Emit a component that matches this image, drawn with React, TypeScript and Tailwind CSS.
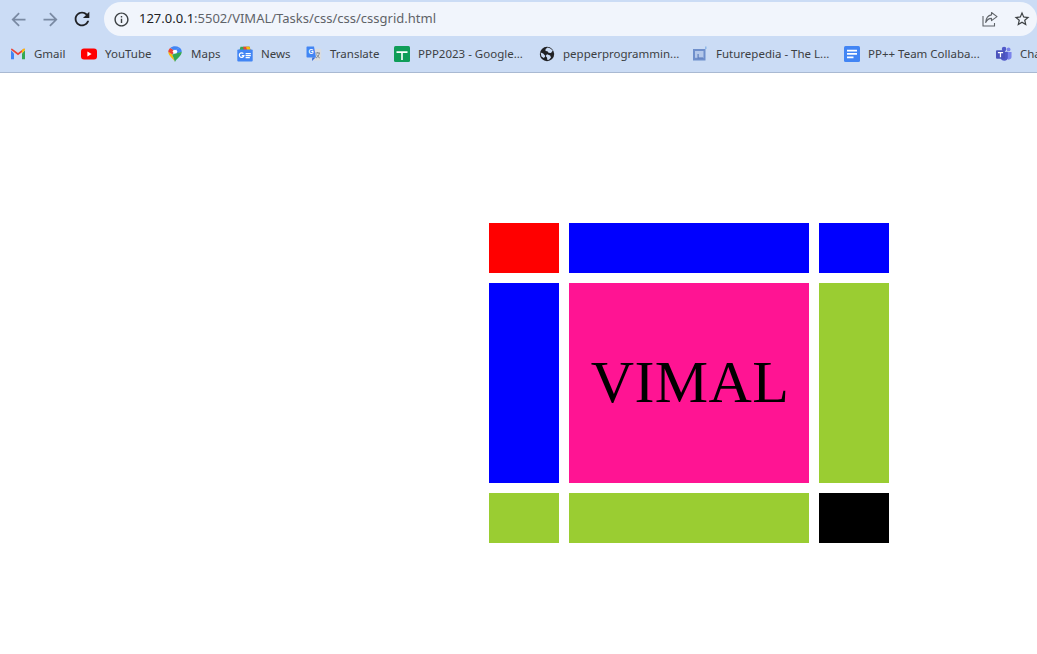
/**
 * Browser window showing the cssgrid.html task page.
 */
import type { ReactNode } from "react";

function GmailIcon() {
  return (
    <svg width="16" height="16" viewBox="0 0 16 16">
      <path d="M1 4.2v9h3V7.5z" fill="#4285f4" />
      <path d="M15 4.2v9h-3V7.5z" fill="#34a853" />
      <path d="M1 3.8 8 9.2l7-5.4-.9-1.4L12 3.9 8 7 4 3.9 1.9 2.4C1.4 2.4 1 3 1 3.8z" fill="#ea4335" />
      <path d="M12 3.9 14.1 2.4c.5 0 .9.6.9 1.4L12 7.5z" fill="#fbbc04" />
    </svg>
  );
}

function YouTubeIcon() {
  return (
    <svg width="16" height="16" viewBox="0 0 16 16">
      <rect x="0" y="2.5" width="16" height="11" rx="3" fill="#ff0000" />
      <path d="M6.4 5.6 10.6 8l-4.2 2.4z" fill="#fff" />
    </svg>
  );
}

function MapsIcon() {
  return (
    <svg width="16" height="16" viewBox="0 0 16 16">
      <g transform="translate(8 8) scale(1.35 1.05) translate(-8 -8)">
        <path d="M8 15.5C7 12.5 3 9.8 3 5.8L6 8.5z" fill="#fbbc04" />
        <path d="M3 5.8C3 4.4 3.6 3 4.5 2.2L8 5 6 8.5z" fill="#ea4335" />
        <path d="M4.5 2.2C5.4 1.2 6.7.7 8 .7c1.2 0 2.3.4 3.2 1.2L8 5z" fill="#4285f4" />
        <path d="M11.2 1.9C12.3 2.8 13 4.2 13 5.8L10 7.6 8 5z" fill="#4285f4" />
        <path d="M13 5.8c0 4-4 6.7-5 9.7l-2-7L10 7z" fill="#34a853" />
        <circle cx="8" cy="5.6" r="1.7" fill="#fff" />
      </g>
    </svg>
  );
}

function NewsIcon() {
  return (
    <svg width="16" height="16" viewBox="0 0 16 16">
      <path d="M2.5 4 3.5.8h9l1 3.2z" fill="#34a853" />
      <path d="M6 .8h6.5l1 3.2H7z" fill="#ea4335" />
      <path d="M9 .8h3.5l1 3.2H10z" fill="#fbbc04" />
      <rect x="0.3" y="3.5" width="15.4" height="12" rx="1" fill="#4285f4" />
      <path d="M6.4 7.6A2.3 2.3 0 1 0 6.9 9.6H4.8" fill="none" stroke="#fff" strokeWidth="1.2" />
      <path d="M8.6 7h5.2v1.2H8.6zM8.6 9h5.2v1.2H8.6zM8.6 11h4.2v1.2H8.6z" fill="#fff" />
    </svg>
  );
}

function TranslateIcon() {
  return (
    <svg width="16" height="16" viewBox="0 0 16 16">
      <path d="M7 3h8.2v11.5H6.5z" fill="#dadce0" />
      <path d="M9.5 7h4.5M11.7 6v1M10 12c2-1 3-2.7 3.3-5M10.5 8.5c.7 1.6 1.8 2.7 3.3 3.5" stroke="#80868b" strokeWidth=".9" fill="none" />
      <path d="M.5 1.5C.5.9.9.5 1.5.5H8l2 11H1.5c-.6 0-1-.4-1-1z" fill="#4285f4" />
      <path d="M6.3 11.5 6 15l3.5-3.5z" fill="#3367d6" />
      <text x="2.4" y="8" fontSize="6.5" fontWeight="700" fill="#fff" fontFamily="Liberation Sans, sans-serif">G</text>
    </svg>
  );
}

function SheetIcon() {
  return (
    <svg width="16" height="16" viewBox="0 0 16 16">
      <rect width="16" height="16" rx="1.5" fill="#0f9d58" />
      <path d="M2.5 5.3h11v1.6H8.8v7.1H7.2V6.9H2.5z" fill="#fff" />
    </svg>
  );
}

function GlobeIcon() {
  return (
    <svg width="16" height="16" viewBox="0 0 16 16">
      <circle cx="8" cy="8" r="7.2" fill="#202124" />
      <path d="M8.6 1.4 11 2.2l2.8 2.4L12 7l-2.4-.2-1.2-1.6L6.5 5 6.6 3zM8 8.2l3.2 1.2.8 2-2 2.4-1.6.2-.4-2.4L6.6 10zM1.6 6.4l2.6 1.2L6 9.6v1.2L4.8 12 2.4 10.4z" fill="#cbdcf5" />
    </svg>
  );
}

function FuturepediaIcon() {
  return (
    <svg width="16" height="16" viewBox="0 0 16 16">
      <path d="M13.8 0.5v2.5" stroke="#8ab4e8" strokeWidth="1.4" />
      <rect x="1" y="3" width="12.5" height="11.5" fill="#6f8fcb" />
      <rect x="3" y="5" width="8.5" height="6.8" fill="#b4c8ea" />
      <path d="M5.5 8h1.2v3.6H11v1H5.5z" fill="#5f7fbd" />
    </svg>
  );
}

function DocsIcon() {
  return (
    <svg width="16" height="16" viewBox="0 0 16 16">
      <rect width="16" height="16" rx="1.5" fill="#4285f4" />
      <path d="M3 3.7h10v1.7H3zM3 7.1h10v1.7H3zM3 10.5h6.5v1.7H3z" fill="#fff" />
    </svg>
  );
}

function TeamsIcon() {
  return (
    <svg width="17" height="16" viewBox="0 0 17 16">
      <circle cx="13.4" cy="3.2" r="2" fill="#7b83eb" />
      <path d="M10.5 6h6v5c0 1.8-1.4 3-3 3s-3-1.2-3-3z" fill="#7b83eb" />
      <circle cx="8.6" cy="2.6" r="2.4" fill="#5059c9" />
      <path d="M5 5.5h7.5v6.5c0 1.8-1.6 3.3-3.6 3.3S5 13.8 5 12z" fill="#5059c9" />
      <rect x="0" y="4" width="9.5" height="9" rx="1" fill="#4b53bc" />
      <path d="M2 6h5.5v1.3H5.4v4.2H4.1V7.3H2z" fill="#fff" />
    </svg>
  );
}

const bookmarks: { label: string; icon: ReactNode; width: string }[] = [
  { label: "Gmail", icon: <GmailIcon />, width: "w-[71px]" },
  { label: "YouTube", icon: <YouTubeIcon />, width: "w-[86px]" },
  { label: "Maps", icon: <MapsIcon />, width: "w-[70px]" },
  { label: "News", icon: <NewsIcon />, width: "w-[69px]" },
  { label: "Translate", icon: <TranslateIcon />, width: "w-[88px]" },
  { label: "PPP2023 - Google...", icon: <SheetIcon />, width: "w-[145px]" },
  { label: "pepperprogrammin...", icon: <GlobeIcon />, width: "w-[153px]" },
  { label: "Futurepedia - The L...", icon: <FuturepediaIcon />, width: "w-[152px]" },
  { label: "PP++ Team Collaba...", icon: <DocsIcon />, width: "w-[152px]" },
  { label: "Cha", icon: <TeamsIcon />, width: "w-[60px]" },
];

function ToolbarButton({ color, size, children }: { color: string; size: number; children: ReactNode }) {
  return (
    <div className="flex h-8 w-8 items-center justify-center">
      <svg width={size} height={size} viewBox="0 0 24 24" fill={color}>
        {children}
      </svg>
    </div>
  );
}

function Toolbar() {
  return (
    <div className="flex h-[36px] items-start pl-[2px] pt-[2px]">
      <div className="flex h-[34px] items-center">
        <ToolbarButton color="#7a8aa3" size={21}>
          <path d="M20 11H7.83l5.59-5.59L12 4l-8 8 8 8 1.41-1.41L7.83 13H20v-2z" />
        </ToolbarButton>
        <ToolbarButton color="#7a8aa3" size={21}>
          <path d="M12 4l-1.41 1.41L16.17 11H4v2h12.17l-5.58 5.59L12 20l8-8z" />
        </ToolbarButton>
        <ToolbarButton color="#1f2125" size={22}>
          <path d="M17.65 6.35C16.2 4.9 14.21 4 12 4c-4.42 0-7.99 3.58-7.99 8s3.57 8 7.99 8c3.73 0 6.84-2.55 7.73-6h-2.08c-.82 2.33-3.04 4-5.65 4-3.31 0-6-2.69-6-6s2.69-6 6-6c1.66 0 3.14.69 4.22 1.78L13 11h7V4l-2.35 2.35z" />
        </ToolbarButton>
      </div>
      <div className="ml-[6px] flex h-[34px] flex-1 items-center rounded-[17px] bg-[#f1f5fc] pl-[9px] pr-[6px]">
        <svg width="17" height="17" viewBox="0 0 24 24" fill="#3c4043">
          <path d="M11 7h2v2h-2zm0 4h2v6h-2zm1-9C6.48 2 2 6.48 2 12s4.48 10 10 10 10-4.48 10-10S17.52 2 12 2zm0 18c-4.41 0-8-3.59-8-8s3.59-8 8-8 8 3.59 8 8-3.59 8-8 8z" />
        </svg>
        <span className="ml-[9px] flex-1 text-[13px] text-[#5f6368]">
          <span className="text-[#202124]">127.0.0.1</span>:5502/VIMAL/Tasks/css/css/cssgrid.html
        </span>
        <svg width="16" height="16" viewBox="0 0 16 16" fill="none" stroke="#5f6368" strokeWidth="1.1">
          <path d="M1 5v10h11.5v-3" />
          <path d="M9.5 1.5 15 5.6l-5.5 4V7.4C7 7.4 5 8.7 3.7 11.5 4 7.5 6 4.4 9.5 3.9z" strokeLinejoin="round" />
        </svg>
        <svg className="ml-[15px]" width="18" height="18" viewBox="0 0 24 24" fill="#3c4043">
          <path d="M22 9.24l-7.19-.62L12 2 9.19 8.63 2 9.24l5.46 4.73L5.82 21 12 17.27 18.18 21l-1.63-7.03L22 9.24zM12 15.4l-3.76 2.27 1-4.28-3.32-2.88 4.38-.38L12 6.1l1.71 4.04 4.38.38-3.32 2.88 1 4.28L12 15.4z" />
        </svg>
      </div>
    </div>
  );
}

function BookmarkBar() {
  return (
    <div className="flex h-[37px] items-center overflow-hidden border-b border-[#a9b9d2] pb-[1px] pl-[10px]">
      {bookmarks.map((bookmark) => (
        <div key={bookmark.label} className={`flex shrink-0 items-center gap-[8px] ${bookmark.width}`}>
          <span className="flex h-4 w-4 shrink-0 items-center justify-center">{bookmark.icon}</span>
          <span className="whitespace-nowrap text-[11.5px] text-[#3c4043]">{bookmark.label}</span>
        </div>
      ))}
    </div>
  );
}

export default function App() {
  return (
    <div className="h-[654px] w-[1037px] overflow-hidden bg-white font-['Noto_Sans',sans-serif]">
      <div className="bg-[#cbdcf5]">
        <Toolbar />
        <BookmarkBar />
      </div>
      <div className="ml-[489px] mt-[150px] grid w-[400px] grid-cols-[70px_240px_70px] grid-rows-[50px_200px_50px] gap-[10px]">
        <div className="bg-[#ff0000]" />
        <div className="bg-[#0000ff]" />
        <div className="bg-[#0000ff]" />
        <div className="bg-[#0000ff]" />
        <div className="flex items-center justify-center bg-[#ff1493] pb-[3px] pl-[2px] font-['Liberation_Serif',serif] text-[60px] tracking-[0.4px] text-black">
          VIMAL
        </div>
        <div className="bg-[#9acd32]" />
        <div className="bg-[#9acd32]" />
        <div className="bg-[#9acd32]" />
        <div className="bg-black" />
      </div>
    </div>
  );
}
